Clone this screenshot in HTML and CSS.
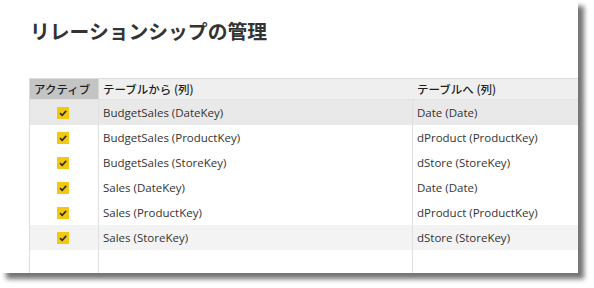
FILE: index.html
```html
<!DOCTYPE html>
<html lang="ja">
<head>
<meta charset="utf-8">
<link rel="stylesheet" href="styles.css">
</head>
<body>
<div class="panel">
  <h1 class="title">リレーションシップの管理</h1>
  <div class="grid">
    <div class="hcell hactive">アクティブ</div>
    <div class="hcell">テーブルから (列)</div>
    <div class="hcell">テーブルへ (列)</div>

    <div class="cell c1 sel"><span class="chk"><svg viewBox="0 0 12 12" width="12" height="12"><path d="M3 6.2 L5.2 8.3 L9.2 3.9" fill="none" stroke="#2b2b2b" stroke-width="1.6"/></svg></span></div>
    <div class="cell c2 sel">BudgetSales (DateKey)</div>
    <div class="cell c3 sel">Date (Date)</div>

    <div class="cell c1"><span class="chk"><svg viewBox="0 0 12 12" width="12" height="12"><path d="M3 6.2 L5.2 8.3 L9.2 3.9" fill="none" stroke="#2b2b2b" stroke-width="1.6"/></svg></span></div>
    <div class="cell c2">BudgetSales (ProductKey)</div>
    <div class="cell c3">dProduct (ProductKey)</div>

    <div class="cell c1"><span class="chk"><svg viewBox="0 0 12 12" width="12" height="12"><path d="M3 6.2 L5.2 8.3 L9.2 3.9" fill="none" stroke="#2b2b2b" stroke-width="1.6"/></svg></span></div>
    <div class="cell c2">BudgetSales (StoreKey)</div>
    <div class="cell c3">dStore (StoreKey)</div>

    <div class="cell c1"><span class="chk"><svg viewBox="0 0 12 12" width="12" height="12"><path d="M3 6.2 L5.2 8.3 L9.2 3.9" fill="none" stroke="#2b2b2b" stroke-width="1.6"/></svg></span></div>
    <div class="cell c2">Sales (DateKey)</div>
    <div class="cell c3">Date (Date)</div>

    <div class="cell c1"><span class="chk"><svg viewBox="0 0 12 12" width="12" height="12"><path d="M3 6.2 L5.2 8.3 L9.2 3.9" fill="none" stroke="#2b2b2b" stroke-width="1.6"/></svg></span></div>
    <div class="cell c2">Sales (ProductKey)</div>
    <div class="cell c3">dProduct (ProductKey)</div>

    <div class="cell c1 hov"><span class="chk"><svg viewBox="0 0 12 12" width="12" height="12"><path d="M3 6.2 L5.2 8.3 L9.2 3.9" fill="none" stroke="#2b2b2b" stroke-width="1.6"/></svg></span></div>
    <div class="cell c2 hov">Sales (StoreKey)</div>
    <div class="cell c3 hov">dStore (StoreKey)</div>

    <div class="cell c1 empty"></div>
    <div class="cell c2 empty"></div>
    <div class="cell c3 empty"></div>
  </div>
</div>
</body>
</html>
```
FILE: styles.css
```css
html, body {
  margin: 0;
  padding: 0;
  background: #ffffff;
}
body {
  width: 594px;
  height: 288px;
  overflow: hidden;
}
.panel {
  width: 578px;
  height: 273px;
  background: #ffffff;
  border-top-left-radius: 8px;
  box-shadow: 6px 6px 5px rgba(0, 0, 0, 0.55);
  padding-left: 30px;
  box-sizing: border-box;
  overflow: hidden;
}
.title {
  margin: 0;
  padding-top: 18px;
  height: 78px;
  box-sizing: border-box;
  font-family: "Noto Sans CJK JP", sans-serif;
  font-weight: bold;
  font-size: 19.8px;
  line-height: 26px;
  color: #333333;
}
.grid {
  display: grid;
  grid-template-columns: 69px 314px 1fr;
  grid-template-rows: 21px repeat(6, 25px) 23px;
  border-top: 1px solid #dddddd;
  border-left: 1px solid #dddddd;
  margin-left: -1px;
}
.hcell {
  background: #efefef;
  border-bottom: 1px solid #e2e2e2;
  font-family: "Noto Sans CJK JP", sans-serif;
  font-weight: 500;
  font-size: 11.5px;
  color: #1e1e1e;
  display: flex;
  align-items: center;
  padding-left: 4px;
  box-sizing: border-box;
}
.hactive {
  background: #c4c4c4;
  padding-left: 4px;
  border-right: 1px solid #d8d8d8;
}
.cell {
  display: flex;
  align-items: center;
  font-family: "Open Sans", sans-serif;
  font-size: 11.5px;
  color: #333333;
  padding-left: 4px;
  box-sizing: border-box;
}
.c1 {
  justify-content: center;
  padding-left: 0;
  border-right: 1px solid #e0e0e0;
}
.c2 {
  border-right: 1px solid #e0e0e0;
}
.sel {
  background: #e9e9e9;
}
.hov {
  background: #f3f3f3;
}
.chk {
  width: 12px;
  height: 12px;
  background: #f2c811;
  display: block;
  margin-left: -2px;
}
.chk svg {
  display: block;
}
```
